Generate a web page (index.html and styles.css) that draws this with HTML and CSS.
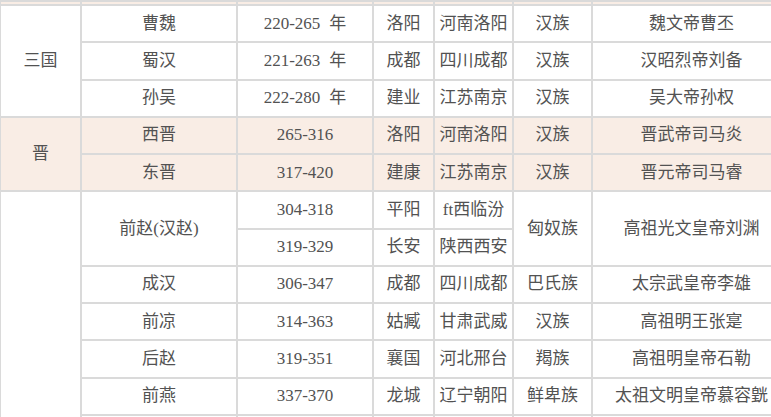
FILE: index.html
```html
<!DOCTYPE html>
<html lang="zh">
<head>
<meta charset="utf-8">
<title>朝代表</title>
<link rel="stylesheet" href="styles.css">
</head>
<body>
<table class="dyn">
  <colgroup>
    <col class="c1"><col class="c2"><col class="c3"><col class="c4"><col class="c5"><col class="c6"><col class="c7">
  </colgroup>
  <tbody>
    <tr class="strip shade">
      <td></td><td></td><td></td><td class="dash"></td><td class="dash"></td><td></td><td></td>
    </tr>
    <tr>
      <td rowspan="3">三国</td>
      <td>曹魏</td><td>220-265<span class="unit">年</span></td><td class="dash">洛阳</td><td class="dash">河南洛阳</td><td>汉族</td><td>魏文帝曹丕</td>
    </tr>
    <tr>
      <td>蜀汉</td><td>221-263<span class="unit">年</span></td><td class="dash">成都</td><td class="dash">四川成都</td><td>汉族</td><td>汉昭烈帝刘备</td>
    </tr>
    <tr>
      <td>孙吴</td><td>222-280<span class="unit">年</span></td><td class="dash">建业</td><td class="dash">江苏南京</td><td>汉族</td><td>吴大帝孙权</td>
    </tr>
    <tr class="shade">
      <td rowspan="2">晋</td>
      <td>西晋</td><td>265-316</td><td class="dash">洛阳</td><td class="dash">河南洛阳</td><td>汉族</td><td>晋武帝司马炎</td>
    </tr>
    <tr class="shade">
      <td>东晋</td><td>317-420</td><td class="dash">建康</td><td class="dash">江苏南京</td><td>汉族</td><td>晋元帝司马睿</td>
    </tr>
    <tr>
      <td rowspan="8"></td>
      <td rowspan="2">前赵(汉赵)</td><td>304-318</td><td class="dash">平阳</td><td class="dash">ft西临汾</td><td rowspan="2">匈奴族</td><td rowspan="2">高祖光文皇帝刘渊</td>
    </tr>
    <tr>
      <td>319-329</td><td class="dash">长安</td><td class="dash">陕西西安</td>
    </tr>
    <tr>
      <td>成汉</td><td>306-347</td><td class="dash">成都</td><td class="dash">四川成都</td><td>巴氏族</td><td>太宗武皇帝李雄</td>
    </tr>
    <tr>
      <td>前凉</td><td>314-363</td><td class="dash">姑臧</td><td class="dash">甘肃武威</td><td>汉族</td><td>高祖明王张寔</td>
    </tr>
    <tr>
      <td>后赵</td><td>319-351</td><td class="dash">襄国</td><td class="dash">河北邢台</td><td>羯族</td><td>高祖明皇帝石勒</td>
    </tr>
    <tr>
      <td>前燕</td><td>337-370</td><td class="dash">龙城</td><td class="dash">辽宁朝阳</td><td>鲜卑族</td><td>太祖文明皇帝慕容皝</td>
    </tr>
    <tr class="tail">
      <td></td><td></td><td class="dash"></td><td class="dash"></td><td></td><td></td>
    </tr>
  </tbody>
</table>
</body>
</html>
```

FILE: styles.css
```css
html, body {
  margin: 0;
  padding: 0;
  background: #ffffff;
  overflow: hidden;
}

.dyn {
  border-collapse: collapse;
  table-layout: fixed;
  width: 791px;
  margin-left: -1px;
  font-family: "Liberation Serif", "Noto Sans CJK SC", serif;
  font-size: 17px;
  color: #525252;
}

.c1 { width: 81px; }
.c2 { width: 156px; }
.c3 { width: 136px; }
.c4 { width: 61px; }
.c5 { width: 79px; }
.c6 { width: 79px; }
.c7 { width: 199px; }

.dyn tr {
  height: 37.27px;
}

.dyn td {
  border: 2px solid #dadada;
  padding: 0;
  text-align: center;
  vertical-align: middle;
  white-space: nowrap;
  line-height: 20px;
}

.dyn td.dash {
  border-left: 2px dashed #dcdcdc;
}

.unit {
  margin-left: 9px;
}

.dyn tr.strip {
  height: 4px;
}

.dyn tr.tail {
  height: 10px;
}

.shade td {
  background: #f9ede5;
}
```
